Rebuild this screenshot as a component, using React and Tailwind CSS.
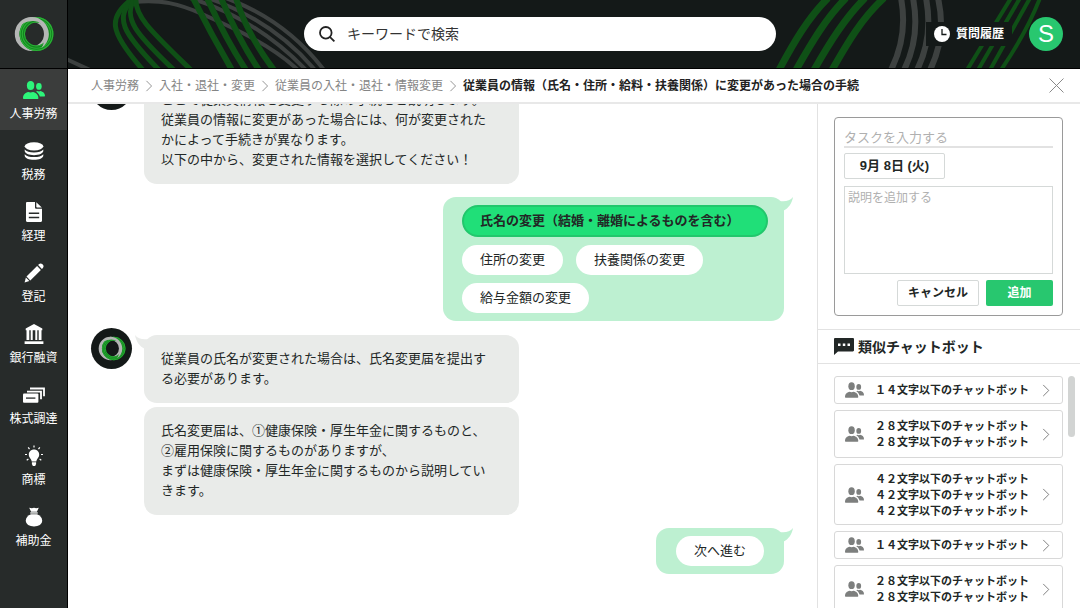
import clsx from "clsx";

const categories = [
  { label: "人事労務", icon: PeopleIcon, active: true },
  { label: "税務", icon: CoinsIcon },
  { label: "経理", icon: DocumentIcon },
  { label: "登記", icon: PencilIcon },
  { label: "銀行融資", icon: BankIcon },
  { label: "株式調達", icon: StockIcon },
  { label: "商標", icon: BulbIcon },
  { label: "補助金", icon: MoneyBagIcon },
];

const crumbs = ["人事労務", "入社・退社・変更", "従業員の入社・退社・情報変更"];

const chatbots = [
  ["１４文字以下のチャットボット"],
  ["２８文字以下のチャットボット", "２８文字以下のチャットボット"],
  ["４２文字以下のチャットボット", "４２文字以下のチャットボット", "４２文字以下のチャットボット"],
  ["１４文字以下のチャットボット"],
  ["２８文字以下のチャットボット", "２８文字以下のチャットボット"],
];

/* ---------- Icons ---------- */

function PeopleIcon({ className = "w-[22px] h-[18px]" }) {
  return (
    <svg viewBox="0 0 22 18" fill="currentColor" className={className}>
      <ellipse cx="7.6" cy="4.6" rx="3.7" ry="4.5" />
      <path d="M0 17.200c0-3.900 2.400-5.400 5.200-6.200l2.400.6 2.400-.6c2.800.8 5.400 2.300 5.400 6.200 0 .4-.3.700-.7.700H.7c-.4 0-.7-.3-.7-.7z" />
      <ellipse cx="15.900" cy="5.400" rx="2.800" ry="3.400" />
      <path d="M13 10.400l1.500-.5 1.500.6 1.500-.6c2.200.7 4.500 1.900 4.500 4.900 0 .4-.2.600-.6.600h-4.600c-.6-2.100-2-3.800-3.800-5z" />
    </svg>
  );
}

function CoinsIcon() {
  return (
    <svg viewBox="0 0 20 18" fill="currentColor" className="w-5 h-[18px]">
      <ellipse cx="10" cy="4.300" rx="9.300" ry="4.100" />
      <path d="M.7 7.600c1.600 2 5 2.900 9.300 2.900s7.700-.9 9.300-2.900v1.200c0 2.500-4.200 4.400-9.300 4.400S.7 11.300.7 8.800z" />
      <path d="M.7 12.200c1.600 2 5 2.900 9.300 2.900s7.700-.9 9.300-2.900v1.200c0 2.500-4.200 4.400-9.300 4.400S.7 15.900.7 13.400z" />
    </svg>
  );
}

function DocumentIcon() {
  return (
    <svg viewBox="0 0 16 20" fill="currentColor" className="w-4 h-5">
      <path
        fillRule="evenodd"
        d="M1.300 0H9v5.400c0 .8.600 1.400 1.400 1.400H16v12c0 .7-.5 1.200-1.200 1.200H1.300C.5 20 0 19.500 0 18.800V1.200C0 .5.5 0 1.300 0zM2.800 10.600V12h10.400v-1.400zM2.800 14.800v1.400h10.400v-1.400z"
      />
      <path d="M10.300.2l5.500 5.400h-4.700c-.5 0-.8-.3-.8-.8z" />
    </svg>
  );
}

function PencilIcon() {
  return (
    <svg viewBox="0 0 20 20" fill="currentColor" className="w-5 h-5">
      <path d="M13.100 3.100l3.800 3.800L6.300 17.400l-3.800-3.800z" />
      <path d="M1.900 14.600l3.500 3.500L.6 19.500z" />
      <path d="M14.100 2.100l1-1c.9-.9 2.200-.9 3.100 0l.7.7c.9.9.9 2.200 0 3.100l-1 1z" />
    </svg>
  );
}

function BankIcon() {
  return (
    <svg viewBox="0 0 20 20" fill="currentColor" className="w-5 h-5">
      <path d="M10 0l8.300 4.400v1.900H1.700V4.400z" />
      <path d="M2.500 6h2.800v10H2.500zM6.700 6h2v10h-2zM11.300 6h2v10h-2zM14.700 6h2.800v10h-2.800z" />
      <path d="M.6 17.300h18.800V20H.6z" />
    </svg>
  );
}

function StockIcon() {
  return (
    <svg viewBox="0 0 22 16" fill="none" className="w-[22px] h-4">
      <path d="M7 1.500h14v7.800" stroke="currentColor" strokeWidth="1.800" />
      <path d="M4 4.600h14v7.600" stroke="currentColor" strokeWidth="1.800" />
      <rect x="0" y="6.600" width="15.400" height="9.200" rx="1" fill="currentColor" />
      <path d="M3 11.100h9.400" stroke="#272b2a" strokeWidth="1.300" />
    </svg>
  );
}

function BulbIcon() {
  return (
    <svg viewBox="0 0 20 22" fill="currentColor" className="w-5 h-[22px]">
      <path d="M10 4.500c3 0 5.200 2.200 5.200 5 0 2.100-1 3.200-1.900 4.400-.6.8-.9 1.500-1 2.500H7.700c-.1-1-.4-1.700-1-2.500-.9-1.200-1.900-2.300-1.900-4.400 0-2.800 2.200-5 5.200-5z" />
      <path d="M7.900 17.300h4.200v1.700l-1 2H8.900l-1-2z" />
      <path
        d="M10 .4v2M4.200 2.300l1.300 1.800M15.800 2.300l-1.300 1.800M1 9.500h2M17 9.500h2M2.700 15.300l1.700-1.200M17.300 15.300l-1.700-1.200"
        stroke="currentColor"
        strokeWidth="1.200"
      />
    </svg>
  );
}

function MoneyBagIcon() {
  return (
    <svg viewBox="0 0 18 20" fill="currentColor" className="w-[18px] h-5">
      <path d="M4.200.8l2.700.5L9 .8l2.100.5 2.700-.5-1.900 3.900H6.100z" />
      <path d="M5.300 5.300h7.400v1.300H5.300z" />
      <path d="M6 7.200h6c3 1.200 5.200 3.300 5.200 6.300 0 4-3.700 5.900-8.200 5.900S.8 17.500.8 13.500c0-3 2.200-5.100 5.200-6.300z" />
    </svg>
  );
}

function ChevronIcon({ className }) {
  return (
    <svg viewBox="0 0 8 14" fill="none" stroke="currentColor" className={className}>
      <path d="M1 1l6 6-6 6" />
    </svg>
  );
}

function Logo({ className }) {
  return (
    <svg viewBox="0 0 40 36" fill="none" className={className}>
      <circle cx="17.800" cy="18" r="14.600" stroke="#b4b6b5" strokeWidth="4.800" />
      <circle cx="22.500" cy="18" r="14.200" stroke="#12851f" strokeWidth="5.600" />
      <circle cx="22.500" cy="18" r="16.300" stroke="#2bb036" strokeWidth="1.200" />
      <circle cx="22.500" cy="18" r="14.200" stroke="#2bb036" strokeWidth="1.100" />
      <circle cx="22.500" cy="18" r="12.100" stroke="#2bb036" strokeWidth="1" />
      {/* grey ring crosses back over the green one */}
      <path
        d="M8 8A14.600 14.600 0 0 1 17.800 1C27 1 34.800 8.600 34.800 18c0 6-3 11-7.400 14 2.400-3.400 3.600-8.400 3.600-14 0-8.400-5.400-13-12-13-4 0-7.600 1-11 3z"
        fill="#b4b6b5"
      />
    </svg>
  );
}

function HeaderStripes() {
  return (
    <svg
      viewBox="68 0 1012 68"
      preserveAspectRatio="xMidYMid slice"
      fill="none"
      aria-hidden="true"
      className="absolute inset-0 w-full h-full"
    >
      <g stroke="#3d4140" strokeWidth="4">
        <path d="M66 59L90 70" />
        <path d="M134 2C160-1 180 4 202 14S268 42 298 70" />
        <path d="M190-2C235 12 275 38 306 70" />
        <path d="M205-3C250 12 288 38 315 70" />
        <path d="M220-4C262 10 298 36 324 70" />
      </g>
      <g stroke="#0f5016" strokeWidth="5">
        <path d="M133-2C108 18 108 30 143 70" />
        <path d="M134-2C114 18 122 32 159 70" />
        <path d="M135-2C122 18 136 34 174 70" />
        <path d="M136-2C134 16 152 32 191 70" />
      </g>
      <g stroke="#0f5016" strokeWidth="6">
        <path d="M193-2C206 24 218 46 232 70" />
        <path d="M207-2C219 24 230 46 246 70" />
        <path d="M221-2C232 24 243 46 259 70" />
        <path d="M236-2C243 22 256 46 274 70" />
      </g>
      <g stroke="#0f5016" strokeWidth="7">
        <path d="M828-2C808 18 794 42 779 70" />
        <path d="M846-2C826 18 812 42 796 70" />
        <path d="M865-2C845 18 830 42 814 70" />
        <path d="M884-2C862 18 848 42 832 70" />
      </g>
      <g stroke="#3d4140" strokeWidth="6">
        <path d="M901-2C906 24 902 48 891 70" />
        <path d="M913-2C918 24 915 48 904 70" />
        <path d="M926-2C931 24 928 48 917 70" />
        <path d="M938-2C944 24 941 48 930 70" />
      </g>
      <g stroke="#0f5016" strokeWidth="4">
        <path d="M1011-2L967 70" />
        <path d="M1020-2L978 70" />
        <path d="M1030-2L990 70" />
        <path d="M1040-2C1030 24 1016 48 1001 70" />
      </g>
    </svg>
  );
}

/* ---------- Chat parts ---------- */

function BotMessages({ messages, tail }) {
  return (
    <div className="flex items-start gap-3">
      <div className="flex items-center justify-center w-[41px] h-[41px] rounded-full bg-[#141918] shrink-0">
        <Logo className="w-7 h-[25px]" />
      </div>
      <div className="relative flex flex-col gap-1 pt-[7px] w-[375px]">
        {tail && (
          <svg viewBox="0 0 14 14" className="absolute -left-[9px] top-[7px] w-3.5 h-3.5" fill="#e9ebe9">
            <path d="M0 0c3 4 8 5 14 4l-4 10C4 11 1 6 0 0z" />
          </svg>
        )}
        {messages.map((lines) => (
          <div key={lines[0]} className="rounded-[13px] bg-[#e9ebe9] px-[17px] py-3.5 text-[13px] leading-5">
            {lines.map((line) => (
              <p key={line}>{line}</p>
            ))}
          </div>
        ))}
      </div>
    </div>
  );
}

function UserBubble({ className, children }) {
  return (
    <div className={clsx("relative self-end rounded-[13px] bg-[#bdf0d1]", className)}>
      <svg viewBox="0 0 14 14" className="absolute -right-[9px] top-0 w-3.5 h-3.5" fill="#bdf0d1">
        <path d="M14 0c-3 4-8 5-14 4l4 10C10 11 13 6 14 0z" />
      </svg>
      {children}
    </div>
  );
}

function Choice({ selected, children }) {
  return (
    <button
      type="button"
      className={clsx(
        "rounded-full text-[13px] leading-5",
        selected
          ? "w-full border-2 border-[#22c76c] bg-[#20df78] px-4 py-1 text-left font-bold"
          : "bg-white px-[18px] py-[5px]"
      )}
    >
      {children}
    </button>
  );
}

/* ---------- Page sections ---------- */

function Header() {
  return (
    <header className="relative grid grid-cols-[1fr_472px_1fr] items-center h-[69px] shrink-0 bg-[#141918] border-b border-black">
      <div className="absolute inset-y-0 left-[68px] right-0 overflow-hidden">
        <HeaderStripes />
      </div>
      <a
        href="#"
        aria-label="ホーム"
        className="relative flex items-center justify-center w-[68px] h-[68px] bg-[#272b2a] border-r border-black"
      >
        <Logo className="w-10 h-9" />
      </a>
      <label className="relative flex items-center gap-3 h-[34px] rounded-full bg-white px-[15px]">
        <svg viewBox="0 0 16 16" fill="none" stroke="#222" strokeWidth="1.800" className="w-4 h-4">
          <circle cx="6.800" cy="6.800" r="5.800" />
          <path d="M10.800 10.800l4.600 4.600" />
        </svg>
        <input
          type="text"
          aria-label="検索"
          placeholder="キーワードで検索"
          className="flex-1 min-w-0 text-sm outline-none placeholder:text-[#333]"
        />
      </label>
      <div className="relative flex items-center justify-end gap-[17px] pr-[17px]">
        <button
          type="button"
          className="flex items-center gap-1.5 h-6 bg-[#141918] px-2 text-xs font-bold text-white"
        >
          <svg viewBox="0 0 16 16" className="w-4 h-4">
            <circle cx="8" cy="8" r="8" fill="#fff" />
            <path d="M8 3v5.500h4.500" fill="none" stroke="#141918" strokeWidth="1.300" />
          </svg>
          質問履歴
        </button>
        <button type="button" className="w-[34px] h-[34px] rounded-full bg-[#28c76f] text-2xl leading-none text-white">
          S
        </button>
      </div>
    </header>
  );
}

function Sidebar() {
  return (
    <nav className="w-[68px] shrink-0 bg-[#272b2a] border-r border-black">
      {categories.map(({ label, icon: Icon, active }) => (
        <a
          key={label}
          href="#"
          className={clsx("flex flex-col items-center h-[61px] pt-2.5 text-xs text-white", active && "bg-[#3b3d3c]")}
        >
          <span className={clsx("flex items-center justify-center h-[22px]", active && "text-[#2df57a]")}>
            <Icon />
          </span>
          <span className="mt-1 leading-[18px]">{label}</span>
        </a>
      ))}
    </nav>
  );
}

function Breadcrumb() {
  return (
    <div className="flex items-center justify-between h-[35px] shrink-0 border-b-2 border-[#e8e8e8] pl-[23px] pr-4">
      <nav className="flex items-center gap-1.5 text-xs text-[#858585] whitespace-nowrap">
        {crumbs.map((crumb) => (
          <span key={crumb} className="flex items-center gap-1.5">
            <a href="#">{crumb}</a>
            <ChevronIcon className="w-2 h-3" />
          </span>
        ))}
        <span className="font-bold text-[#222]">
          従業員の情報（氏名・住所・給料・扶養関係）に変更があった場合の手続
        </span>
      </nav>
      <button type="button" aria-label="閉じる">
        <svg viewBox="0 0 15 15" fill="none" stroke="#8a8a8a" className="w-[15px] h-[15px]">
          <path d="M.5.5l14 14M14.500.5l-14 14" />
        </svg>
      </button>
    </div>
  );
}

function Chat() {
  return (
    <main className="flex flex-1 flex-col justify-end min-w-0 overflow-hidden pl-[23px] pr-[33px] pb-[34px]">
      <BotMessages
        messages={[
          [
            "ここで従業員情報を変更する際の手続をご説明します。",
            "従業員の情報に変更があった場合には、何が変更された",
            "かによって手続きが異なります。",
            "以下の中から、変更された情報を選択してください！",
          ],
        ]}
      />
      <UserBubble className="flex flex-wrap gap-x-[13px] gap-y-2 w-[341px] mt-[13px] pl-[19px] pr-4 py-2">
        <Choice selected>氏名の変更（結婚・離婚によるものを含む）</Choice>
        <Choice>住所の変更</Choice>
        <Choice>扶養関係の変更</Choice>
        <Choice>給与金額の変更</Choice>
      </UserBubble>
      <div className="mt-[7px]">
        <BotMessages
          tail
          messages={[
            ["従業員の氏名が変更された場合は、氏名変更届を提出す", "る必要があります。"],
            [
              "氏名変更届は、①健康保険・厚生年金に関するものと、",
              "②雇用保険に関するものがありますが、",
              "まずは健康保険・厚生年金に関するものから説明してい",
              "きます。",
            ],
          ]}
        />
      </div>
      <UserBubble className="flex mt-[13px] px-5 py-2">
        <Choice>次へ進む</Choice>
      </UserBubble>
    </main>
  );
}

function TaskForm() {
  return (
    <form className="ml-4 mr-[17px] my-[13px] rounded border border-[#9a9a9a] px-[9px] pt-2.5 pb-[9px]">
      <input
        type="text"
        aria-label="タスク"
        placeholder="タスクを入力する"
        className="block w-full h-5 border-b-2 border-[#e2e2e2] text-[13px] outline-none placeholder:text-[#b0b0b0]"
      />
      <button
        type="button"
        className="block w-[101px] h-[26px] mt-[5px] rounded-[2px] border border-[#d5d9d8] text-[13px] font-bold"
      >
        9月 8日 (火)
      </button>
      <textarea
        aria-label="説明"
        placeholder="説明を追加する"
        className="block w-full h-[88px] mt-[7px] resize-none border border-[#d5d9d8] px-[3px] py-0.5 text-xs leading-[18px] outline-none placeholder:text-[#b0b0b0]"
      />
      <div className="flex justify-end gap-[7px] mt-1.5 text-xs font-bold">
        <button type="button" className="w-[82px] h-[26px] rounded-[2px] border border-[#d5d9d8]">
          キャンセル
        </button>
        <button type="submit" className="w-[67px] h-[26px] rounded-[2px] bg-[#28c76f] text-white">
          追加
        </button>
      </div>
    </form>
  );
}

function SimilarChatbots() {
  return (
    <section className="flex flex-1 flex-col min-h-0">
      <h2 className="flex items-center gap-1 h-[35px] shrink-0 border-y border-[#e2e2e2] px-4 text-sm leading-5 font-bold">
        <svg viewBox="0 0 20 17" className="w-5 h-[17px]">
          <path d="M0 1.200C0 .5.5 0 1.200 0h17.600c.7 0 1.200.5 1.200 1.200v11.100c0 .7-.5 1.200-1.200 1.200H4L0 17z" fill="#222726" />
          <path d="M4 5.500h2.500V8H4zM8.800 5.500h2.500V8H8.800zM13.500 5.500H16V8h-2.500z" fill="#fff" />
        </svg>
        類似チャットボット
      </h2>
      <div className="flex flex-1 items-start gap-[5px] min-h-0 overflow-hidden pl-4 pr-[5px] pt-3">
        <ul className="flex flex-1 flex-col gap-1.5">
          {chatbots.map((lines, i) => (
            <li key={i}>
              <a
                href="#"
                className={clsx(
                  "flex items-center rounded-[3px] border border-[#d8d8d8] pl-2.5 pr-3 py-[5px]",
                  lines.length === 2 && "min-h-12",
                  lines.length === 3 && "min-h-[61px]"
                )}
              >
                <PeopleIcon className="w-[19px] h-4 text-[#7d7f7e]" />
                <span className="flex-1 ml-[11px] text-[11px] leading-4 font-bold">
                  {lines.map((line, n) => (
                    <span key={n} className="block">
                      {line}
                    </span>
                  ))}
                </span>
                <ChevronIcon className="w-2 h-[13px] text-[#777]" />
              </a>
            </li>
          ))}
        </ul>
        <div className="w-[7px] h-[61px] rounded-full bg-[#d2d4d3]" />
      </div>
    </section>
  );
}

export default function App() {
  return (
    <div className="flex flex-col h-screen overflow-hidden bg-white text-[#222726] font-['Liberation_Sans','Noto_Sans_CJK_JP',sans-serif]">
      <Header />
      <div className="flex flex-1 min-h-0">
        <Sidebar />
        <div className="flex flex-1 flex-col min-w-0">
          <Breadcrumb />
          <div className="flex flex-1 min-h-0">
            <Chat />
            <aside className="flex flex-col w-[263px] shrink-0 border-l border-[#e2e2e2]">
              <TaskForm />
              <SimilarChatbots />
            </aside>
          </div>
        </div>
      </div>
    </div>
  );
}
